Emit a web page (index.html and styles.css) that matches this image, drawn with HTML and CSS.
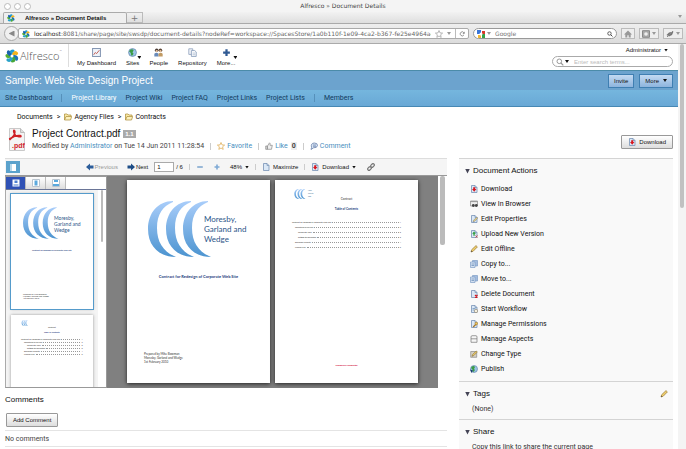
FILE: index.html
```html
<!DOCTYPE html>
<html lang="en">
<head>
<meta charset="utf-8">
<title>Alfresco » Document Details</title>
<link rel="stylesheet" href="styles.css">
</head>
<body>
<svg class="defs" aria-hidden="true">
  <defs>
    <linearGradient id="moonFill" x1="0" y1="0" x2="0" y2="1"><stop offset="0" stop-color="#a9cdfa"/><stop offset="1" stop-color="#4c94d0"/></linearGradient>
    <path id="moon" d="M25 0C10 0 0 12 0 28c0 17 11 28 28 28C16 51 9 42 9 27 9 13 15 5 25 1z"/>
    <symbol id="moons" viewBox="0 0 64 56"><g fill="url(#moonFill)"><use href="#moon"/><use href="#moon" x="18"/><use href="#moon" x="35"/></g></symbol>
    <symbol id="flower" viewBox="0 0 14 14">
      <g fill="none" stroke-width="3.2" stroke-linecap="round">
        <path d="M7 5.5C5.500 4 6 2 8 2" stroke="#1d9bd7"/><path d="M8.500 6c0-2 2-3 3-1.500" stroke="#f2b21c"/>
        <path d="M9 7.500c2 0 3 1.500 2.500 2.500" stroke="#1a73b8"/><path d="M8 9c1.500 1 1 3-.5 3" stroke="#45a63a"/>
        <path d="M6 9c0 1.500-1.500 3-3 2" stroke="#2ba3c9"/><path d="M5 7C3.500 8 2 7.500 2 6.500" stroke="#56ae31"/><path d="M5 5.500C4 5 3 4 3.500 3" stroke="#1b62ad"/>
      </g><circle cx="7" cy="7" r="1.500" fill="#fff"/>
    </symbol>
    <symbol id="doc" viewBox="0 0 8 8"><path d="M1.500.5h3.500l2 2v5h-5.500z" fill="#dbe8f6" stroke="#7792b5" stroke-width=".8"/><path d="M5 .5v2h2" fill="none" stroke="#7792b5" stroke-width=".7"/></symbol>
    <symbol id="download" viewBox="0 0 8 8"><use href="#doc"/><path d="M3.200 2.200h2v1.800h1.200L4.200 6.700 2 4h1.200z" fill="#d8151c"/></symbol>
    <symbol id="view" viewBox="0 0 8 8"><path d="M.5 1h7v5h-7z" fill="#eee" stroke="#8a8a8a" stroke-width=".7"/><path d="M.5 1.600h7" stroke="#999"/><circle cx="3.300" cy="5.500" r="1.400" fill="#444"/><circle cx="6.300" cy="5.500" r="1.400" fill="#444"/></symbol>
    <symbol id="pencil" viewBox="0 0 8 8"><path d="M1 7l.7-2.300L6 .6l1.400 1.300-4.300 4.400z" fill="#f1d06a" stroke="#94763a" stroke-width=".7"/><path d="M1 7l.4-1.300.9.8z" fill="#444"/></symbol>
    <symbol id="edit" viewBox="0 0 8 8"><use href="#doc"/><path d="M3 7l.5-1.700L6.800 2l1 1-3.300 3.400z" fill="#efd173" stroke="#6b7690" stroke-width=".5"/></symbol>
    <symbol id="upload" viewBox="0 0 8 8"><use href="#doc"/><path d="M4 1.500L2.200 3.700h1.200v2h1.300v-2h1.200z" fill="#2b9b38"/><path d="M5.500 5.500l2 2m0-2l-2 2" stroke="#d33" stroke-width=".8"/></symbol>
    <symbol id="copy" viewBox="0 0 8 8"><path d="M2.500.5h5v5.500h-5z" fill="#a3bcdf" stroke="#7f9dc6" stroke-width=".7"/><path d="M.5 2h4.500v5.500H.5z" fill="#d3e0f1" stroke="#7f9dc6" stroke-width=".7"/><path d="M1.500 4h2.500M1.500 5.500h2.500" stroke="#5378aa" stroke-width=".6"/></symbol>
    <symbol id="delete" viewBox="0 0 8 8"><use href="#doc"/><path d="M5 5l2.500 2.500m0-2.500L5 7.500" stroke="#d3191f" stroke-width="1.100"/></symbol>
    <symbol id="workflow" viewBox="0 0 8 8"><use href="#doc"/><path d="M2.500 3.500h3M2.500 5h2" stroke="#5378aa" stroke-width=".6"/><circle cx="6" cy="6" r="1.700" fill="#f5f0df" stroke="#8b8069" stroke-width=".6"/></symbol>
    <symbol id="perms" viewBox="0 0 8 8"><use href="#doc"/><path d="M3.200 7l3-3" stroke="#a5782a" stroke-width="1.200"/><circle cx="6.300" cy="3.500" r="1.300" fill="#f0c95c" stroke="#a5782a" stroke-width=".6"/></symbol>
    <symbol id="aspects" viewBox="0 0 8 8"><path d="M1 2Q1 .7 2 .7h4Q7 .7 7 2v5.300H1zM1 3.800h6" fill="#f6f6f6" stroke="#777" stroke-width=".7"/></symbol>
    <symbol id="type" viewBox="0 0 8 8"><path d="M.7 1.500h6v5.800h-6z" fill="#d5d0c5" stroke="#888" stroke-width=".7"/><path d="M2 6.300l.5-1.700L6.300 1l1 1-3.500 3.500z" fill="#f1d06a" stroke="#7d6a39" stroke-width=".6"/></symbol>
    <symbol id="globe" viewBox="0 0 8 8"><circle cx="4" cy="4" r="3.500" fill="#9cc4e6" stroke="#5c82a8" stroke-width=".6"/><path d="M2 1.500q2-1 3 .5L4 4l1 1-1.500 2Q2 6 2.500 4.500L1 3z" fill="#3b9c46"/></symbol>
    <symbol id="publish" viewBox="0 0 8 8"><use href="#globe"/><path d="M0 4.500l3 1L1.500 8z" fill="#1c3d6e"/></symbol>
    <symbol id="dash" viewBox="0 0 8 8"><path d="M.5.5h7v7h-7z" fill="#edf3fa" stroke="#8597b3" stroke-width=".9"/><path d="M1.500 6l1.500-2 1 1 2.500-3" fill="none" stroke="#c05045" stroke-width=".8"/></symbol>
    <symbol id="people" viewBox="0 0 8 8"><circle cx="2.400" cy="2" r="1.600" fill="#4a3b35"/><circle cx="5.700" cy="2" r="1.600" fill="#5b4434"/><circle cx="2.400" cy="2.700" r="1" fill="#e8c19b"/><circle cx="5.700" cy="2.700" r="1" fill="#e8c19b"/><path d="M.3 7.500V5q2-1.500 3.700 0v2.500z" fill="#6789b9"/><path d="M4 7.500V5q2-1.500 3.700 0v2.500z" fill="#c19a63"/></symbol>
    <symbol id="repo" viewBox="0 0 8 8"><path d="M.7.700h3.500v5H.7z" fill="#f2f5fa" stroke="#8c9fbb" stroke-width=".7"/><path d="M3 2.300h3l1.300 1.200v4H3z" fill="#fff" stroke="#8096b6" stroke-width=".7"/><path d="M4 4.500h2.500M4 6h2.500" stroke="#98abc8" stroke-width=".6"/></symbol>
    <symbol id="plus" viewBox="0 0 8 8"><path d="M4 1v6M1 4h6" stroke="#305a93" stroke-width="2"/></symbol>
    <symbol id="thinplus" viewBox="0 0 8 8"><path d="M4 1.500v5M1.500 4h5" stroke="#7ea9d5" stroke-width="1.600"/></symbol>
    <symbol id="minus" viewBox="0 0 8 8"><path d="M1.200 4h5.600" stroke="#82a9d0" stroke-width="1.600"/></symbol>
    <symbol id="folder" viewBox="0 0 8 8"><path d="M.5 7V1h2.500l1 1h3v1.500" fill="#f9e9a6" stroke="#a98b35" stroke-width=".7"/><path d="M.5 7l1.500-3.500h5.700L6.500 7z" fill="#fbf0bd" stroke="#a98b35" stroke-width=".7"/></symbol>
    <symbol id="left" viewBox="0 0 8 8"><path d="M0 4l4-3.500v2h3.500v3H4v2z" fill="#2c5d9a"/></symbol>
    <symbol id="right" viewBox="0 0 8 8"><path d="M8 4L4 .5v2H.5v3H4v2z" fill="#1d4c86"/></symbol>
    <symbol id="star" viewBox="0 0 8 8"><path d="M4 .5l1 2.400 2.600.2-2 1.700.6 2.600L4 6 1.800 7.400l.6-2.600-2-1.700L3 2.900z" fill="#fff" stroke="currentColor" stroke-width=".7"/></symbol>
    <symbol id="thumb" viewBox="0 0 8 8"><path d="M.7 4h1.600v3.300H.7zM2.300 4.300L4.500.8q1 .3.500 2.500h2.300L6.500 7.300H2.300z" fill="#eee" stroke="#888" stroke-width=".7"/></symbol>
    <symbol id="bubble" viewBox="0 0 8 8"><path d="M1 7.500l.5-2Q.5 1 4.500 1q3.200.2 3 2.500-.3 2.500-4 2.300z" fill="#d8e3f2" stroke="#6981ab" stroke-width=".8"/><path d="M3 3h3M3 4.300h3" stroke="#5270a2" stroke-width=".6"/></symbol>
    <symbol id="link" viewBox="0 0 8 8"><g fill="none" stroke="#777" stroke-width="1.200"><rect x="-2" y="-1.300" width="4" height="2.600" rx="1.200" transform="translate(2.500 5.500) rotate(-45)"/><rect x="-2" y="-1.300" width="4" height="2.600" rx="1.200" transform="translate(5.500 2.500) rotate(-45)"/></g></symbol>
    <symbol id="lens" viewBox="0 0 8 8"><circle cx="3.300" cy="3.300" r="2.300" fill="none" stroke="currentColor" stroke-width="1"/><path d="M5 5l2.300 2.300" stroke="currentColor" stroke-width="1.200"/></symbol>
    <symbol id="reload" viewBox="0 0 8 8"><path d="M6.500 2.300A2.700 2.700 0 1 0 6.700 5" fill="none" stroke="#777" stroke-width="1"/><path d="M7.500.7v3H4.700z" fill="#777"/></symbol>
  </defs>
</svg>
<div class="window">
  <header class="chrome">
    <div class="titlebar"><span class="lights"><i></i><i></i><i></i></span><span class="wintitle">Alfresco » Document Details</span></div>
    <div class="tabs">
      <div class="tab"><svg class="ic"><use href="#flower"/></svg><b>Alfresco » Document Details</b></div>
      <button class="newtab" aria-label="New tab">+</button>
      <span class="caret pale end"></span>
    </div>
    <div class="toolbar">
      <button class="back" aria-label="Back"><span></span></button>
      <div class="url"><svg class="ic"><use href="#flower"/></svg>
        <span class="address"><b>localhost</b>:8081/share/page/site/swsdp/document-details?nodeRef=workspace://SpacesStore/1a0b110f-1e09-4ca2-b367-fe25e4964a4d</span>
        <svg class="ic grey"><use href="#star"/></svg><span class="caret pale"></span>
        <button class="reload" aria-label="Reload"><svg class="sm"><use href="#reload"/></svg></button>
      </div>
      <div class="google"><svg class="ic" viewBox="0 0 8 8"><path d="M0 0h8v8H0z" fill="#fff"/><path d="M0 0h4v4H0z" fill="#3a76d8"/><path d="M5 1h3v5H5z" fill="#d93a2b"/><path d="M5 4h3v4H5z" fill="#35a04a"/><path d="M1 5h3v3H1z" fill="#f2b832"/><circle cx="4" cy="4" r="1.500" fill="#fff"/></svg><span class="caret pale"></span>
        <input aria-label="Google" placeholder="Google"><svg class="sm"><use href="#lens"/></svg></div>
      <button class="tool" aria-label="Home"><svg class="ic" viewBox="0 0 8 8"><path d="M4 .5L0 4.500h1.300v3h2V5.200h1.400v2.300h2v-3H8z" fill="#999"/></svg></button>
      <button class="tool wide" aria-label="Bookmarks"><svg class="ic" viewBox="0 0 8 8"><path d="M.5.700h7v6.600h-7z" fill="#aaa" stroke="#888"/><circle cx="4" cy="4" r="1.800" fill="#eee"/></svg><span class="caret pale"></span></button>
      <button class="tool wide" aria-label="Add-ons"><svg class="ic" viewBox="0 0 8 8"><path d="M.5 5L3 2.500 7.500 1.500 6 5 3 6.500z" fill="#777"/><path d="M1 7l6-6" stroke="#888"/></svg><span class="caret pale"></span></button>
    </div>
  </header>
  <div class="viewport">
    <div class="page">
      <header class="top">
        <a href="#" class="logo"><svg><use href="#flower"/></svg>Alfresco<sup>™</sup></a>
        <nav class="apps">
          <a href="#"><svg class="ic"><use href="#dash"/></svg>My Dashboard</a>
          <a href="#"><svg class="ic"><use href="#globe"/></svg>Sites<span class="caret"></span></a>
          <a href="#"><svg class="ic"><use href="#people"/></svg>People</a>
          <a href="#"><svg class="ic"><use href="#repo"/></svg>Repository</a>
          <a href="#"><svg class="ic"><use href="#plus"/></svg>More...<span class="caret"></span></a>
        </nav>
        <div class="user">
          <a href="#">Administrator<span class="caret"></span></a>
          <div class="search"><svg class="ic grey"><use href="#lens"/></svg><span class="caret"></span><input aria-label="Search" placeholder="Enter search terms..."></div>
        </div>
      </header>
      <div class="sitebar"><h1>Sample: Web Site Design Project</h1><button class="blue">Invite</button><button class="blue">More<span class="caret"></span></button></div>
      <nav class="sitenav">
        <a href="#">Site Dashboard</a><i></i><a href="#" class="on">Project Library</a><a href="#">Project Wiki</a><a href="#">Project FAQ</a><a href="#">Project Links</a><a href="#">Project Lists</a><i></i><a href="#">Members</a>
      </nav>
      <nav class="crumbs"><a href="#">Documents</a><span>&gt;</span><a href="#"><svg class="ic"><use href="#folder"/></svg>Agency Files</a><span>&gt;</span><a href="#"><svg class="ic"><use href="#folder"/></svg>Contracts</a></nav>
      <section class="dochead">
        <svg class="pdf" viewBox="0 0 17 23"><path d="M1.500.5h11l4 4v18h-15z" fill="#f4f4f4" stroke="#c9c9c9"/><path d="M12.500.5v4h4" fill="#ddd" stroke="#bbb"/><path d="M1 11C5 10 8 5 6.500 2.500 5 1 5 7 10 8.500c3 1 4-.5 2-1C9 7 4 8.500 1.500 12" fill="none" stroke="#cf2228" stroke-width="1.500"/><text x="4" y="20">.pdf</text></svg>
        <div class="info">
          <h2>Project Contract.pdf <span class="ver">1.1</span></h2>
          <div class="meta"><span>Modified by <a href="#">Administrator</a> on Tue 14 Jun 2011 11:28:54</span><i></i><a href="#"><svg class="ic gold"><use href="#star"/></svg>Favorite</a><i></i><a href="#"><svg class="ic"><use href="#thumb"/></svg>Like</a><b>0</b><i></i><a href="#"><svg class="ic"><use href="#bubble"/></svg>Comment</a></div>
        </div>
        <button class="btn"><svg class="ic"><use href="#download"/></svg>Download</button>
      </section>
      <div class="columns">
        <main>
          <div class="viewbar">
            <button class="side" aria-label="Sidebar"><span></span></button>
            <button class="prev"><svg class="ic"><use href="#left"/></svg>Previous</button>
            <button class="next"><svg class="ic"><use href="#right"/></svg>Next</button>
            <input value="1" aria-label="Page number"><span class="of">/ 6</span><i></i>
            <button aria-label="Zoom out"><svg class="ic"><use href="#minus"/></svg></button>
            <button class="zoomin" aria-label="Zoom in"><svg class="ic"><use href="#thinplus"/></svg></button>
            <button>48%<span class="caret"></span></button><i></i>
            <button><svg class="ic"><use href="#doc"/></svg>Maximize</button><i></i>
            <button><svg class="ic"><use href="#download"/></svg>Download<span class="caret"></span></button>
            <button aria-label="Link"><svg class="ic"><use href="#link"/></svg></button>
          </div>
          <div class="viewer">
            <aside class="thumbs">
              <div class="modes"><button class="on" aria-label="Thumbnails"><svg viewBox="0 0 8 8"><path d="M.5.5h7v7h-7z" fill="#fff"/><path d="M2.500 1.500h3v2.500h-3zM1.500 5.500h5v1h-5z" fill="#4d7fd0"/></svg></button><button aria-label="Pages"><svg viewBox="0 0 8 8"><path d="M.5.5h7v7h-7z" fill="#fff" stroke="#b9c4cf"/><path d="M2.500 1.500h3v5h-3z" fill="#5ba9dd"/></svg></button><button aria-label="Outline"><svg viewBox="0 0 8 8"><path d="M.5.5h7v7h-7z" fill="#fff" stroke="#b9c4cf"/><path d="M2 1h4v2H2zM1 5h6v2H1z" fill="#5ba9dd"/></svg></button></div>
              <div class="strip">
                <div class="thumblist">
                  <article class="mini chosen"><div class="brand"><svg><use href="#moons"/></svg><p>Moresby,<br>Garland and<br>Wedge</p></div><h4>Contract for Redesign of Corporate Web Site</h4><footer>Prepared by Mike Bowman<br>Moresby, Garland and Wedge<br>1st February 2010</footer></article>
                  <article class="mini toc"><svg class="tiny"><use href="#moons"/></svg><p class="run">Contract</p><h4>Table of Contents</h4>
                    <ol><li>Contract for Redesign of Corporate Web Site<i></i>1</li><li class="l2">Objectives Overview<i></i>2</li><li class="l3">Corporate Web<i></i>3</li><li class="l3">Setting the Direction<i></i>3</li><li class="l2">Economic Climate<i></i>4</li><li class="l2">Phased Plan<i></i>5</li></ol></article>
                </div>
                <div class="rail"><span></span></div>
              </div>
            </aside>
            <div class="canvas">
              <article class="sheet"><div class="brand"><svg><use href="#moons"/></svg><p>Moresby,<br>Garland and<br>Wedge</p></div><h4>Contract for Redesign of Corporate Web Site</h4><footer>Prepared by Mike Bowman<br>Moresby, Garland and Wedge<br>1st February 2010</footer></article>
              <article class="sheet toc"><div class="lh"><svg class="tiny"><use href="#moons"/></svg><span>Moresby,<br>Garland and<br>Wedge</span></div><p class="run">Contract</p><h4>Table of Contents</h4>
                <ol><li>Contract for Redesign of Corporate Web Site<i></i>1</li><li class="l2">Objectives Overview<i></i>2</li><li class="l3">Corporate Web<i></i>3</li><li class="l3">Setting the Direction<i></i>3</li><li class="l2">Economic Climate<i></i>4</li><li class="l2">Phased Plan<i></i>5</li></ol><p class="conf">Commercial Confidential</p></article>
            </div>
            <div class="rail big"><span></span></div>
          </div>
          <section class="comments"><h3>Comments</h3><button class="btn">Add Comment</button><p>No comments</p></section>
        </main>
        <aside class="panel">
          <section><h3>Document Actions</h3>
            <ul>
              <li><a href="#"><svg class="ic"><use href="#download"/></svg>Download</a></li>
              <li><a href="#"><svg class="ic"><use href="#view"/></svg>View In Browser</a></li>
              <li><a href="#"><svg class="ic"><use href="#edit"/></svg>Edit Properties</a></li>
              <li><a href="#"><svg class="ic"><use href="#upload"/></svg>Upload New Version</a></li>
              <li><a href="#"><svg class="ic"><use href="#pencil"/></svg>Edit Offline</a></li>
              <li><a href="#"><svg class="ic"><use href="#copy"/></svg>Copy to...</a></li>
              <li><a href="#"><svg class="ic"><use href="#copy"/></svg>Move to...</a></li>
              <li><a href="#"><svg class="ic"><use href="#delete"/></svg>Delete Document</a></li>
              <li><a href="#"><svg class="ic"><use href="#workflow"/></svg>Start Workflow</a></li>
              <li><a href="#"><svg class="ic"><use href="#perms"/></svg>Manage Permissions</a></li>
              <li><a href="#"><svg class="ic"><use href="#aspects"/></svg>Manage Aspects</a></li>
              <li><a href="#"><svg class="ic"><use href="#type"/></svg>Change Type</a></li>
              <li><a href="#"><svg class="ic"><use href="#publish"/></svg>Publish</a></li>
            </ul>
          </section>
          <section><h3>Tags<svg class="ic end"><use href="#pencil"/></svg></h3><p>(None)</p></section>
          <section><h3>Share</h3><p>Copy this link to share the current page</p></section>
        </aside>
      </div>
    </div>
    <div class="scroll"><span></span></div>
  </div>
</div>
</body>
</html>
```
FILE: styles.css
```css
* { box-sizing: border-box; }
body { margin: 0; background: #fff; color: #111; font: 6px/8px "Liberation Sans", Arial, sans-serif; }
h1, h2, h3, h4, p, ul, ol { margin: 0; padding: 0; font-weight: normal; }
ul, ol { list-style: none; }
a { color: inherit; text-decoration: none; }
button, input { font: inherit; color: inherit; margin: 0; padding: 0; border: 0; background: none; min-width: 0; }
button { display: flex; align-items: center; justify-content: center; flex: none; }
input { outline: 0; }
svg { flex: none; display: block; }
.defs { position: absolute; width: 0; height: 0; }
.ic { width: 8px; height: 8px; }
.sm { width: 6px; height: 6px; }
.grey { color: #999; }
.gold { color: #dba544; }
.end { margin-left: auto; }
.caret { flex: none; width: 4px; height: 3px; background: #111; clip-path: polygon(0 0, 100% 0, 50% 100%); }
.caret.pale { background: #999; }

.window { display: flex; flex-direction: column; height: 100vh; overflow: hidden; }
.chrome { flex: none; font-family: "DejaVu Sans", sans-serif; color: #444; }
.titlebar { display: flex; align-items: center; height: 12px; padding: 0 4px; background: #f4f4f4; }
.lights { display: flex; gap: 3px; width: 60px; }
.lights i { width: 7px; height: 7px; border: 1px solid #bbb; border-radius: 50%; background: #fff; }
.wintitle { flex: 1; text-align: center; padding-right: 60px; }
.tabs { display: flex; align-items: flex-end; height: 12px; padding: 0 4px 0 3px; background: linear-gradient(#f2f2f2, #dedede); border-bottom: 1px solid #aaa; }
.tab { display: flex; align-items: center; gap: 10px; width: 124px; height: 11px; padding: 0 3px; border: 1px solid #aaa; border-bottom: 0; border-radius: 2px 2px 0 0; background: #efefef; color: #111; font-family: "Liberation Sans", sans-serif; }
.newtab { width: 16px; height: 11px; border: 1px solid #bbb; border-left: 0; color: #777; font-size: 9px; }
.tabs .end { margin-bottom: 5px; }
.toolbar { display: flex; align-items: center; height: 20px; padding: 0 3px 0 4px; gap: 4px; background: linear-gradient(#eee, #dcdcdc); border-bottom: 1px solid #aaa; }
.back { width: 15px; height: 15px; border: 1px solid #aaa; border-radius: 50%; background: #f0f0f0; }
.back span { width: 6px; height: 6px; background: #888; clip-path: polygon(0 50%, 100% 0, 100% 100%); }
.url { display: flex; align-items: center; flex: 1; min-width: 0; gap: 4px; height: 11px; margin-left: -5px; padding-left: 3px; border: 1px solid #aaa; border-radius: 2px; background: #fff; color: #666; }
.url b { color: #222; font-weight: normal; }
.address { flex: 1; overflow: hidden; white-space: nowrap; }
.reload { width: 13px; height: 9px; border-left: 1px solid #bbb; }
.google { display: flex; align-items: center; gap: 2px; width: 144px; height: 11px; padding: 0 3px; border: 1px solid #999; border-radius: 6px; background: #fff; color: #333; }
.google input { flex: 1; padding-left: 2px; }
.google input::placeholder { color: #777; }
.tool { gap: 2px; width: 14px; height: 11px; border: 1px solid #bbb; background: #eee; }
.tool.wide { width: 20px; }

.viewport { display: flex; flex: 1; min-height: 0; overflow: hidden; }
.page { flex: 1; min-width: 0; }
.scroll { flex: none; width: 8px; padding: 0 2px; background: #f4f4f4; }
.scroll span { display: block; height: 164px; border-radius: 2px; background: #c1c1c1; }

.top { display: flex; height: 26px; padding: 0 5px; }
.logo { display: flex; align-items: center; gap: 1px; width: 64px; margin-bottom: 3px; border-right: 1px solid #ddd; color: #555; font: 300 11px/16px "Open Sans", sans-serif; }
.logo svg { width: 14px; height: 14px; }
.logo sup { align-self: flex-start; margin-left: -1px; font-size: 3px; line-height: 14px; }
.apps { display: flex; gap: 10px; padding: 4px 8px; }
.apps a { display: flex; flex-direction: column; align-items: center; gap: 2px; position: relative; }
.apps .ic { width: 9px; height: 9px; }
.apps .caret { position: absolute; right: -2px; top: 8px; }
.user { margin-left: auto; width: 121px; padding-top: 1px; }
.user > a { display: flex; align-items: center; justify-content: flex-end; gap: 3px; height: 10px; padding-right: 5px; }
.search { display: flex; align-items: center; gap: 1px; height: 11px; margin-top: 1px; padding: 0 3px; border: 1px solid #aaa; border-radius: 6px; }
.search input { flex: 1; padding-left: 4px; }
.search input::placeholder { color: #bbb; }

.sitebar { display: flex; align-items: center; gap: 5px; height: 20px; padding: 0 5px; border-top: 1px solid #4b8ba9; background: #6ca3ce; }
.sitebar h1 { flex: 1; color: #fff; font-size: 10px; line-height: 14px; }
.blue { height: 14px; padding: 0 5px; gap: 4px; border: 1px solid #3f7fb2; background: linear-gradient(#c3daf2, #8db4dd); }
.sitenav { display: flex; align-items: center; gap: 9px; height: 17px; padding: 0 5px; border-bottom: 1px solid #4788b4; background: linear-gradient(#75b6de, #69a8d6); color: #123a5c; font: 7px/8px Roboto, sans-serif; }
.sitenav .on { color: #fff; }
.sitenav i { width: 1px; height: 8px; background: #5690ba; }

.crumbs { display: flex; gap: 4px; padding: 6px 17px 0; font: 7px/8px Roboto, sans-serif; }
.crumbs a { display: flex; gap: 2px; }
.dochead { display: flex; padding: 7px 5px 0 8px; height: 37px; }
.pdf { width: 17px; height: 23px; }
.pdf text { font: bold 7px "Liberation Sans", sans-serif; fill: #cf2228; }
.info { flex: 1; padding-left: 7px; }
.info h2 { font-size: 10px; line-height: 12px; }
.ver { display: inline-block; padding: 0 2px; background: #aaa; color: #fff; font-size: 6px; font-weight: bold; line-height: 8px; vertical-align: 1px; }
.meta { display: flex; align-items: center; gap: 6px; margin-top: 2px; color: #444; font: 7px/8px Roboto, sans-serif; }
.meta a { color: #4a8fc0; }
.meta > a { display: flex; gap: 2px; }
.meta > b { margin-left: -3px; padding: 0 1px; background: #eee; }
.meta i { width: 1px; height: 7px; background: #ccc; }
.btn { gap: 3px; height: 14px; padding: 0 6px; border: 1px solid #999; border-radius: 1px; background: linear-gradient(#fff, #ddd); }
.dochead .btn { margin-top: 7px; }

.columns { display: flex; gap: 12px; padding: 0 5px; }
main { flex: 1; min-width: 0; }
.viewbar { display: flex; align-items: center; gap: 6px; height: 18px; padding-left: 1px; border-top: 1px solid #ddd; border-bottom: 1px solid #999; background: #f5f5f5; }
.viewbar button { gap: 3px; }
.viewbar .side { width: 14px; height: 12px; background: #5ba2cc; }
.side span { width: 6px; height: 7px; background: #fff; border-left: 2px solid #b8d9ec; }
.viewbar .prev { margin-left: auto; margin-right: 3px; gap: 1px; color: #999; }
.viewbar .next { gap: 1px; }
.viewbar .zoomin { margin: 0 3px; }
.viewbar input { width: 20px; height: 10px; margin-right: -4px; padding: 0 2px; border: 1px solid #aaa; background: #fff; }
.viewbar i { width: 1px; height: 6px; background: #ccc; }
.viewbar button:last-child { margin-right: 72px; margin-left: 5px; }
.viewer { display: flex; height: 212px; }
.thumbs { display: flex; flex-direction: column; width: 102px; border: 1px solid #999; border-left-color: #aaa; background: #f4f4f4; }
.modes { display: flex; background: #fff; border-bottom: 1px solid #6a7597; }
.modes button { width: 20px; height: 12px; border-right: 1px solid #bbb; background: linear-gradient(#fff, #ddd); }
.modes button.on { background: #2f51b5; }
.modes svg { width: 8px; height: 8px; }
.strip { display: flex; flex: 1; min-height: 0; overflow: hidden; }
.thumblist { display: flex; flex-direction: column; gap: 6px; flex: 1; padding: 4px 0 4px 5px; }
.rail { width: 9px; padding: 0 3px; background: #fff; }
.rail span { display: block; height: 52px; border-radius: 2px; background: #bbb; }
.rail.big { padding: 0 2px; }
.rail.big span { height: 69px; }
.mini, .sheet { flex: none; background: #fff; color: #333; font: 3px/4px Lato, sans-serif; box-shadow: 0 1px 4px #222; }
.mini { height: 115px; margin-right: 5px; padding: 13px 12px 0; font: 2px/2px Lato, sans-serif; box-shadow: 0 0 3px #999; }
.mini.chosen { outline: 1px solid #559bcb; }
.brand { display: flex; color: #2b5588; }
.brand svg { width: 64px; height: 56px; }
.brand p { margin: 13px 0 0 -8px; font-size: 8px; line-height: 10px; white-space: nowrap; }
.mini .brand svg { width: 36px; height: 32px; }
.mini .brand p { margin: 8px 0 0 -5px; font-size: 5px; line-height: 6px; }
.sheet h4, .mini h4 { text-align: center; color: #23407c; font-weight: bold; white-space: nowrap; }
.sheet h4 { margin-top: 17px; font-size: 4px; line-height: 6px; }
.mini h4 { margin-top: 10px; }
.sheet footer { margin: 72px 0 0 -4px; }
.mini footer { margin-top: 42px; }
.canvas { flex: 1; display: flex; justify-content: center; gap: 5px; padding: 4px 0; background: #808080; overflow: hidden; }
.sheet { width: 143px; height: 203px; padding: 21px; }
.sheet.toc { padding: 9px 17px; }
.mini.toc { padding: 5px 10px; }
.tiny { width: 16px; height: 10px; }
.mini .tiny { width: 8px; height: 6px; }
.lh { display: flex; font-size: 1px; line-height: 3px; color: #2b5588; }
.run { text-align: center; }
.sheet .run { margin-top: -2px; }
.toc h4 { margin-top: 5px; font-size: 3px; }
.mini.toc h4 { margin-top: 3px; font-size: 2px; }
.toc ol { margin-top: 8px; font-size: 2px; line-height: 5px; }
.mini.toc ol { margin-top: 5px; line-height: 3px; }
.toc li { display: flex; align-items: center; gap: 1px; }
.toc li i { flex: 1; border-top: 1px dotted #999; }
.l2 { padding-left: 3px; }
.l3 { padding-left: 6px; }
.conf { margin-top: 113px; text-align: center; color: #d00030; font-size: 2px; font-weight: bold; }

.comments h3 { margin-top: 7px; font-size: 8px; line-height: 10px; }
.comments .btn { margin: 8px 1px 3px; }
.comments p { padding: 4px 0 3px; border: 1px solid #e4e4e4; border-width: 1px 0; font: 7px/8px Roboto, sans-serif; color: #444; }
.panel { flex: none; width: 214px; font: 7px/8px Roboto, sans-serif; }
.panel section { padding: 7px 5px 6px 6px; border-top: 1px solid #d4d4d4; background: #f9f9f9; }
.panel h3 { display: flex; align-items: center; gap: 3px; font: 8px/10px "Liberation Sans", Arial, sans-serif; }
.panel h3::before { content: ""; width: 5px; height: 5px; background: #445; clip-path: polygon(0 0, 100% 0, 50% 100%); }
.panel ul { display: grid; gap: 7px; padding: 9px 0 2px 5px; }
.panel li a { display: flex; gap: 3px; }
.panel p { padding: 6px 0 0 7px; color: #333; }
```
